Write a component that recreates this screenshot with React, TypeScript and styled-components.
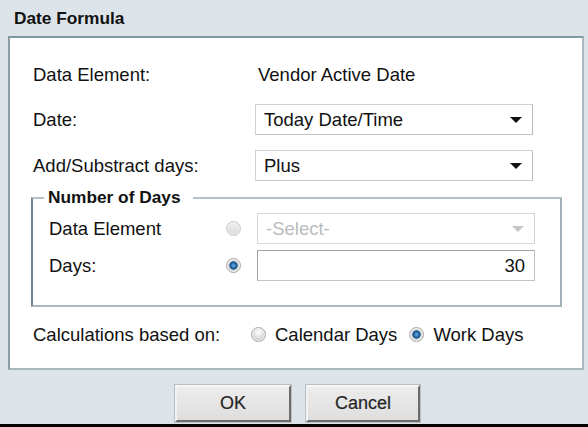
import React from 'react';
import styled, { createGlobalStyle } from 'styled-components';

const GlobalStyle = createGlobalStyle`
  html, body {
    margin: 0;
    padding: 0;
    background: #dde4e9;
    font-family: "Liberation Sans", Arial, sans-serif;
    color: #111;
  }
`;

const TEXT = '18.5px';

const Window = styled.div`
  width: 588px;
  height: 427px;
  display: flex;
  flex-direction: column;
  overflow: hidden;
  background: #dde4e9;
`;

const TitleBar = styled.div`
  height: 36px;
  display: flex;
  align-items: center;
  padding-left: 14px;
  font-size: 17.3px;
  font-weight: bold;
  color: #111;
`;

const Panel = styled.div`
  height: 334px;
  box-sizing: border-box;
  margin: 0 4px 0 8px;
  background: #fff;
  border-style: solid;
  border-width: 2px;
  border-color: #7f99a3 #a9b7be #a9b7be #8a9ca4;
  padding: 21px 20px 0 21px;
  display: flex;
  flex-direction: column;
`;

const FormRow = styled.div<{ $gap?: number }>`
  display: grid;
  grid-template-columns: 222px 278px;
  align-items: center;
  height: 31px;
  margin-left: 2px;
  margin-bottom: ${(p) => p.$gap ?? 0}px;
  font-size: ${TEXT};
`;

const ValueText = styled.span`
  padding-left: 3px;
`;

const SelectBox = styled.div<{ $disabled?: boolean }>`
  height: 31px;
  box-sizing: border-box;
  display: flex;
  align-items: center;
  justify-content: space-between;
  padding: 0 10px 0 8px;
  background: #fff;
  border: 1px solid ${(p) => (p.$disabled ? '#d6d9db' : '#d2d2d2')};
  border-right-color: ${(p) => (p.$disabled ? '#d0d3d5' : '#b9b9b9')};
  border-bottom-color: ${(p) => (p.$disabled ? '#d6d9db' : '#c6c6c6')};
  color: ${(p) => (p.$disabled ? '#b9bcbe' : '#111')};
  font-size: ${TEXT};
`;

const Arrow = styled.span<{ $disabled?: boolean }>`
  width: 0;
  height: 0;
  border-left: 6px solid transparent;
  border-right: 6px solid transparent;
  border-top: 6px solid ${(p) => (p.$disabled ? '#c4c7c9' : '#111')};
`;

const NumberInput = styled.div`
  height: 31px;
  box-sizing: border-box;
  display: flex;
  align-items: center;
  justify-content: flex-end;
  padding-right: 9px;
  border: 1px solid #a3a3a3;
  border-right-color: #c4c4c4;
  border-bottom-color: #c4c4c4;
  background: #fff;
  font-size: ${TEXT};
`;

const GroupBox = styled.fieldset`
  margin: 7px 0 0 0;
  width: 531px;
  box-sizing: border-box;
  border-style: solid;
  border-width: 2px;
  border-color: #b3c2c9 #9fb0b8 #a9b8bf #6f8893;
  padding: 6px 0 24px 16px;
`;

const GroupTitle = styled.legend`
  font-size: 17.3px;
  font-weight: bold;
  line-height: 19px;
  padding: 0 12px 0 4px;
  margin-left: -5px;
  color: #111;
`;

const GroupRow = styled.div<{ $gap?: number }>`
  display: grid;
  grid-template-columns: 177px 31px 278px;
  align-items: center;
  height: ${(p) => (p.$gap !== undefined ? 30 : 31)}px;
  margin-bottom: ${(p) => p.$gap ?? 0}px;
  font-size: ${TEXT};
`;

const Radio = styled.span<{ $checked?: boolean; $disabled?: boolean }>`
  width: 15px;
  height: 15px;
  box-sizing: border-box;
  border-radius: 50%;
  border: 1px solid ${(p) => (p.$disabled ? '#c9c9c9' : '#a8a8a8')};
  background: ${(p) =>
    p.$checked
      ? 'radial-gradient(circle at 50% 50%, #6fb2e6 0, #1f66a8 2.6px, #1c4f80 3.8px, #c9cdd0 4.4px, #e6e6e6 7px)'
      : p.$disabled
        ? 'linear-gradient(#f2f2f2, #d9d9d9)'
        : 'radial-gradient(circle at 50% 35%, #ffffff 0, #ececec 3px, #d2d2d2 7px)'};
  box-shadow: inset 0 0 0 1px ${(p) => (p.$disabled ? '#eeeeee' : '#f4f4f4')};
  display: inline-block;
  flex-shrink: 0;
`;

const CalcRow = styled.div`
  display: flex;
  align-items: center;
  height: 31px;
  margin: 12px 0 0 2px;
  font-size: ${TEXT};
`;

const CalcLabel = styled.span`
  width: 218px;
`;

const Choice = styled.label`
  display: flex;
  align-items: center;
  gap: 9px;
  margin-right: 12px;
`;

const Footer = styled.div`
  display: flex;
  justify-content: center;
  gap: 15px;
  padding: 15px 0 0 7px;
  height: 54px;
  box-sizing: border-box;
`;

const DialogButton = styled.button<{ $w: number }>`
  width: ${(p) => p.$w}px;
  height: 37px;
  background: linear-gradient(#ececec, #dedede);
  border-style: solid;
  border-width: 2px;
  border-color: #f6f6f6 #6c6c6c #6c6c6c #f2f2f2;
  box-shadow: 0 0 0 1px #b9bec2;
  font-family: "Liberation Sans", Arial, sans-serif;
  font-size: 18px;
  color: #222;
  padding: 0;
  -webkit-text-stroke: 0.2px #333;
`;

const BottomEdge = styled.div`
  height: 3px;
  background: #000;
`;

export default function App() {
  return (
    <>
      <GlobalStyle />
      <Window>
        <TitleBar>Date Formula</TitleBar>
        <Panel>
          <FormRow $gap={14}>
            <span>Data Element:</span>
            <ValueText>Vendor Active Date</ValueText>
          </FormRow>
          <FormRow $gap={15}>
            <span>Date:</span>
            <SelectBox>
              <span>Today Date/Time</span>
              <Arrow />
            </SelectBox>
          </FormRow>
          <FormRow>
            <span>Add/Substract days:</span>
            <SelectBox>
              <span>Plus</span>
              <Arrow />
            </SelectBox>
          </FormRow>
          <GroupBox>
            <GroupTitle>Number of Days</GroupTitle>
            <GroupRow $gap={7}>
              <span>Data Element</span>
              <Radio $disabled />
              <SelectBox $disabled>
                <span>-Select-</span>
                <Arrow $disabled />
              </SelectBox>
            </GroupRow>
            <GroupRow>
              <span>Days:</span>
              <Radio $checked />
              <NumberInput>30</NumberInput>
            </GroupRow>
          </GroupBox>
          <CalcRow>
            <CalcLabel>Calculations based on:</CalcLabel>
            <Choice>
              <Radio />
              Calendar Days
            </Choice>
            <Choice>
              <Radio $checked />
              Work Days
            </Choice>
          </CalcRow>
        </Panel>
        <Footer>
          <DialogButton $w={116}>OK</DialogButton>
          <DialogButton $w={114}>Cancel</DialogButton>
        </Footer>
        <BottomEdge />
      </Window>
    </>
  );
}
